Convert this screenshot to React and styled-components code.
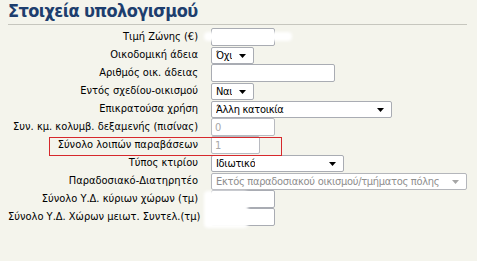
import React from "react";
import styled, { createGlobalStyle } from "styled-components";

const Global = createGlobalStyle`
  html, body { margin: 0; padding: 0; background: #f4f4ec; }
  body { font-family: "DejaVu Sans Condensed", "DejaVu Sans", Tahoma, sans-serif; font-stretch: condensed; font-size: 11px; color: #000; }
`;

const Page = styled.div`
  position: relative;
  width: 477px;
  height: 261px;
  padding: 0 10px 0 8px;
  box-sizing: border-box;
  background: #f4f4ec;
`;

const Header = styled.div`
  height: 24px;
  border-bottom: 1px solid #c6c6be;
  display: flex;
  align-items: flex-end;
`;

const Title = styled.h2`
  margin: 0 0 3px 0;
  font-family: "DejaVu Sans Condensed", "DejaVu Sans", Tahoma, sans-serif;
  font-stretch: condensed;
  font-weight: bold;
  font-size: 18px;
  line-height: 20px;
  color: #1d3e6e;
  letter-spacing: -0.6px;
`;

const Form = styled.div`
  padding-top: 3px;
  display: flex;
  flex-direction: column;
`;

const Row = styled.div`
  position: relative;
  display: flex;
  align-items: center;
  gap: 13px;
  height: 18px;
`;

const Highlight = styled.span`
  position: absolute;
  left: 41px;
  top: 1px;
  width: 233px;
  height: 19px;
  box-sizing: border-box;
  border: 1px solid rgb(214, 40, 44);
  pointer-events: none;
  z-index: 2;
`;

const Label = styled.label`
  flex: none;
  width: 190px;
  text-align: right;
  white-space: nowrap;
  line-height: 18px;
`;

const TextInput = styled.input`
  flex: none;
  box-sizing: border-box;
  width: ${(p) => p.$w}px;
  height: 18px;
  margin: 0;
  padding: 0 3px;
  border: 1px solid ${(p) => (p.disabled ? "#b8bac0" : "#a9acb3")};
  border-radius: 2px;
  background: #fff;
  font: inherit;
  font-stretch: condensed;
  color: ${(p) => (p.disabled ? "#a8a8a8" : "#000")};
  -webkit-text-fill-color: ${(p) => (p.disabled ? "#a8a8a8" : "#000")};
  opacity: 1;
  outline: none;
`;

const SelectBox = styled.div`
  flex: none;
  box-sizing: border-box;
  width: ${(p) => p.$w}px;
  height: 17px;
  display: flex;
  align-items: center;
  justify-content: space-between;
  gap: 4px;
  padding: 0 7px 0 4px;
  border: 1px solid ${(p) => (p.$disabled ? "#b4b6bb" : "#a9acb3")};
  border-radius: 2px;
  background: #fff;
  color: ${(p) => (p.$disabled ? "#8e8e8e" : "#000")};
  white-space: nowrap;
  overflow: hidden;
`;

const SelectText = styled.span`
  letter-spacing: -0.3px;
  overflow: hidden;
`;

const Arrow = styled.svg`
  flex: none;
  width: 7px;
  height: 4px;
  margin-top: 2px;
  fill: ${(p) => (p.$disabled ? "#a6a6a6" : "#000")};
`;

const Redaction = styled.div`
  position: absolute;
  background: #fff;
  filter: blur(1.5px);
  border-radius: 4px;
`;

const Select = ({ w, value, disabled }) => (
  <SelectBox $w={w} $disabled={disabled}>
    <SelectText>{value}</SelectText>
    <Arrow $disabled={disabled} viewBox="0 0 7 4">
      <polygon points="0,0 7,0 3.5,4" />
    </Arrow>
  </SelectBox>
);

export default function App() {
  return (
    <Page>
      <Global />
      <Header>
        <Title>Στοιχεία υπολογισμού</Title>
      </Header>
      <Form>
        <Row>
          <Label>Τιμή Ζώνης (€)</Label>
          <TextInput $w={64} defaultValue="" />
        </Row>
        <Row>
          <Label>Οικοδομική άδεια</Label>
          <Select w={43} value="Όχι" />
        </Row>
        <Row>
          <Label>Αριθμός οικ. άδειας</Label>
          <TextInput $w={124} defaultValue="" />
        </Row>
        <Row>
          <Label>Εντός σχεδίου-οικισμού</Label>
          <Select w={43} value="Ναι" />
        </Row>
        <Row>
          <Label>Επικρατούσα χρήση</Label>
          <Select w={181} value="Άλλη κατοικία" />
        </Row>
        <Row>
          <Label>Συν. κμ. κολυμβ. δεξαμενής (πισίνας)</Label>
          <TextInput $w={64} defaultValue="0" disabled />
        </Row>
        <Row>
          <Highlight />
          <Label>Σύνολο λοιπών παραβάσεων</Label>
          <TextInput $w={49} defaultValue="1" disabled />
        </Row>
        <Row>
          <Label>Τύπος κτιρίου</Label>
          <Select w={133} value="Ιδιωτικό" />
        </Row>
        <Row>
          <Label>Παραδοσιακό-Διατηρητέο</Label>
          <Select w={256} value="Εκτός παραδοσιακού οικισμού/τμήματος πόλης" disabled />
        </Row>
        <Row>
          <Label>Σύνολο Υ.Δ. κύριων χώρων (τμ)</Label>
          <TextInput $w={64} defaultValue="" />
        </Row>
        <Row>
          <Label>Σύνολο Υ.Δ. Χώρων μειωτ. Συντελ.(τμ)</Label>
          <TextInput $w={64} defaultValue="" />
        </Row>
      </Form>
      <Redaction style={{ left: 204, top: 32, width: 88, height: 9 }} />
      <Redaction style={{ left: 204, top: 191, width: 44, height: 37 }} />
    </Page>
  );
}
